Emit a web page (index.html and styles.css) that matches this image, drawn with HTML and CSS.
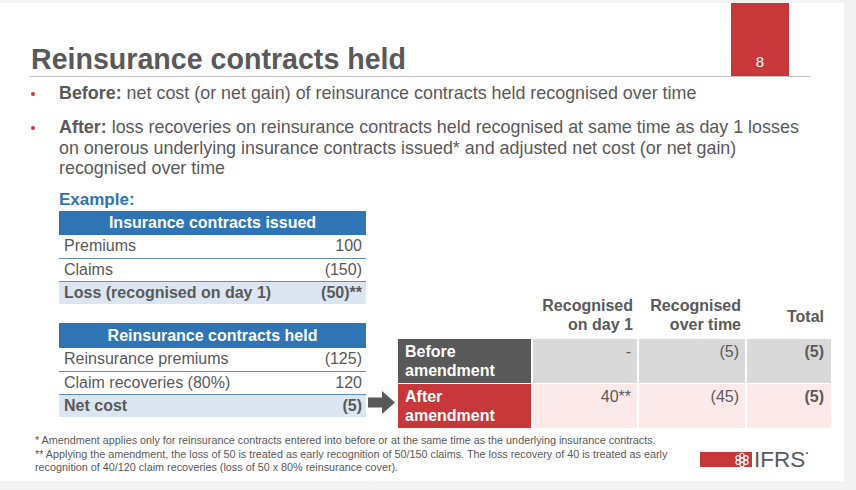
FILE: index.html
```html
<!DOCTYPE html>
<html lang="en">
<head>
<meta charset="utf-8">
<title>Reinsurance contracts held</title>
<link rel="stylesheet" href="styles.css">
</head>
<body>
<div class="slide">
  <header class="head">
    <h1 class="title">Reinsurance contracts held</h1>
    <div class="badge">8</div>
  </header>

  <ul class="bullets">
    <li><span><b>Before:</b> net cost (or net gain) of reinsurance contracts held recognised over time</span></li>
    <li><span><b>After:</b> loss recoveries on reinsurance contracts held recognised at same time as day 1 losses on onerous underlying insurance contracts issued* and adjusted net cost (or net gain) recognised over time</span></li>
  </ul>

  <section class="example">
    <div class="left">
      <div class="ex-title">Example:</div>
      <div class="tbl">
        <div class="th">Insurance contracts issued</div>
        <div class="tr"><span>Premiums</span><span>100</span></div>
        <div class="tr"><span>Claims</span><span>(150)</span></div>
        <div class="tr total"><span>Loss (recognised on day 1)</span><span>(50)**</span></div>
      </div>
      <div class="tbl tbl2">
        <div class="th">Reinsurance contracts held</div>
        <div class="tr"><span>Reinsurance premiums</span><span>(125)</span></div>
        <div class="tr"><span>Claim recoveries (80%)</span><span>120</span></div>
        <div class="tr total"><span>Net cost</span><span>(5)</span></div>
      </div>
    </div>

    <svg class="arrow" width="27" height="23" viewBox="0 0 27 23" aria-hidden="true">
      <path d="M0 6.5 H14 V0 L27 11.5 L14 23 V16.5 H0 Z" fill="#595959"/>
    </svg>

    <table class="cmp">
      <thead>
        <tr>
          <th class="c1"></th>
          <th class="c2">Recognised<br>on day 1</th>
          <th class="c3">Recognised<br>over time</th>
          <th class="c4 mid">Total</th>
        </tr>
      </thead>
      <tbody>
        <tr class="before">
          <td class="lbl">Before<br>amendment</td>
          <td>-</td>
          <td>(5)</td>
          <td class="tot">(5)</td>
        </tr>
        <tr class="after">
          <td class="lbl">After<br>amendment</td>
          <td>40**</td>
          <td>(45)</td>
          <td class="tot">(5)</td>
        </tr>
      </tbody>
    </table>
  </section>

  <footer class="foot">
    <div class="notes">
      <p>* Amendment applies only for reinsurance contracts entered into before or at the same time as the underlying insurance contracts.</p>
      <p>** Applying the amendment, the loss of 50 is treated as early recognition of 50/150 claims. The loss recovery of 40 is treated as early recognition of 40/120 claim recoveries (loss of 50 x 80% reinsurance cover).</p>
    </div>
    <div class="logo">
      <div class="logo-bar">
        <svg width="16" height="16" viewBox="0 0 16 16" aria-hidden="true">
          <g fill="none" stroke="#fff" stroke-width="1.1">
            <circle cx="8" cy="8" r="2.1"/>
            <circle cx="8" cy="3.4" r="2.1"/>
            <circle cx="8" cy="12.6" r="2.1"/>
            <circle cx="4" cy="5.7" r="2.1"/>
            <circle cx="12" cy="5.7" r="2.1"/>
            <circle cx="4" cy="10.3" r="2.1"/>
            <circle cx="12" cy="10.3" r="2.1"/>
          </g>
        </svg>
      </div>
      <span class="logo-text">IFRS</span><span class="reg"></span>
    </div>
  </footer>
</div>
</body>
</html>
```

FILE: styles.css
```css
* {
  box-sizing: border-box;
  margin: 0;
  padding: 0;
}

html, body {
  width: 856px;
  height: 490px;
  overflow: hidden;
}

body {
  background: #f3f3f3;
  font-family: "Liberation Sans", Arial, sans-serif;
  color: #595959;
}

.slide {
  margin-top: 3px;
  width: 844px;
  height: 478px;
  background: #fff;
  display: flex;
  flex-direction: column;
}

/* Header */
.head {
  display: flex;
  align-items: flex-end;
  height: 74px;
  margin: 0 34px 0 30px;
  border-bottom: 1px solid #c4c4c4;
}

.title {
  font-size: 28.6px;
  font-weight: bold;
  line-height: 28px;
  padding: 0 0 3px 1px;
  color: #595959;
}

.badge {
  margin-left: auto;
  margin-right: 21px;
  width: 58px;
  height: 73px;
  background: #c8373a;
  color: #fff;
  font-size: 15px;
  display: flex;
  justify-content: center;
  align-items: flex-end;
  padding-bottom: 6px;
}

/* Bullets */
.bullets {
  list-style: none;
  margin: 6px 34px 0 0;
  font-size: 17.9px;
  line-height: 20.6px;
}

.bullets li {
  display: flex;
}

.bullets li + li {
  margin-top: 13.5px;
}

.bullets li::before {
  content: "";
  flex: none;
  width: 4px;
  height: 4px;
  border-radius: 50%;
  background: #c8373a;
  margin: 9px 24px 0 31px;
}

/* Example */
.example {
  display: flex;
  align-items: flex-start;
  margin-top: 9px;
  padding-left: 59px;
}

.left {
  width: 307px;
  flex: none;
}

.ex-title {
  color: #2e74b5;
  font-weight: bold;
  font-size: 17px;
  line-height: 22px;
  padding-top: 1px;
}

.tbl .th {
  background: #2f75b5;
  color: #fff;
  font-weight: bold;
  font-size: 16px;
  text-align: center;
  height: 24px;
  line-height: 24px;
}

.tbl .tr {
  display: flex;
  justify-content: space-between;
  height: 23px;
  line-height: 22px;
  padding: 0 4px 0 5px;
  font-size: 16px;
}

.tbl .tr + .tr {
  border-top: 1px solid #5b8fc9;
}

.tbl .tr.total {
  background: #dce6f2;
  font-weight: bold;
}

.tbl2 {
  margin-top: 19px;
}

.tbl2 .th {
  height: 25px;
  line-height: 25px;
}

.arrow {
  flex: none;
  margin: 203px 0 0 2px;
}

/* Comparison table */
.cmp {
  flex: none;
  margin: 108px 0 0 3px;
  border-collapse: collapse;
  width: 433px;
  font-size: 16px;
  line-height: 19px;
}

.cmp th {
  font-weight: bold;
  text-align: right;
  vertical-align: bottom;
  height: 42px;
  padding: 0 5px 4px 0;
}

.cmp th.mid {
  vertical-align: middle;
  padding: 0 7px 0 0;
}

.cmp .c1 { width: 134px; }
.cmp .c2 { width: 106px; }
.cmp .c3 { width: 108px; }
.cmp .c4 { width: 85px; }

.cmp td {
  height: 45px;
  vertical-align: top;
  text-align: right;
  padding: 3px 6px 0 0;
  border-left: 2px solid #fff;
  border-top: 1px solid #fff;
}

.cmp td.lbl {
  text-align: left;
  padding-left: 7px;
  color: #fff;
  font-weight: bold;
  border-left: 0;
}

.cmp td.tot {
  font-weight: bold;
  padding-right: 7px;
}

.before td { background: #d9d9d9; }
.before td.lbl { background: #595959; }
.after td { background: #fce9e9; }
.after td.lbl { background: #c8373a; }

/* Footer */
.foot {
  display: flex;
  margin-top: 6px;
}

.notes {
  flex: none;
  width: 675px;
  padding-left: 35px;
  font-size: 10.8px;
  line-height: 13.5px;
}

.logo {
  display: flex;
  align-items: center;
  margin: 18px 0 0 25px;
  height: 15px;
}

.logo-bar {
  width: 52px;
  height: 15px;
  background: #c8373a;
  display: flex;
  justify-content: flex-end;
  align-items: center;
  padding-right: 2px;
}

.logo-text {
  font-size: 22.5px;
  line-height: 15px;
  color: #58595b;
  margin-left: 2px;
}

.reg {
  align-self: flex-start;
  width: 2px;
  height: 2px;
  border-radius: 50%;
  background: #58595b;
  margin-left: 1px;
}
```
